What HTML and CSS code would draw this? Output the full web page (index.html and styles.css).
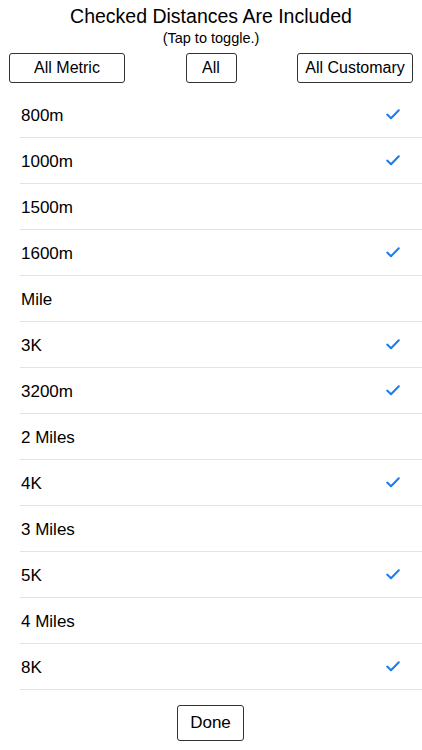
FILE: index.html
```html
<!DOCTYPE html>
<html>
<head>
<meta charset="utf-8">
<link rel="stylesheet" href="styles.css">
</head>
<body>
<div class="page">
  <header class="header">
    <div class="title">Checked Distances Are Included</div>
    <div class="subtitle">(Tap to toggle.)</div>
  </header>
  <div class="toolbar">
    <button class="btn btn-wide">All Metric</button>
    <button class="btn btn-narrow">All</button>
    <button class="btn btn-wide">All Customary</button>
  </div>
  <ul class="list">
    <li class="row"><span>800m</span><svg class="check" viewBox="0 0 14 11"><path d="M1.2 5.6 L5 9.2 L12.8 1.2"/></svg></li>
    <li class="row"><span>1000m</span><svg class="check" viewBox="0 0 14 11"><path d="M1.2 5.6 L5 9.2 L12.8 1.2"/></svg></li>
    <li class="row"><span>1500m</span></li>
    <li class="row"><span>1600m</span><svg class="check" viewBox="0 0 14 11"><path d="M1.2 5.6 L5 9.2 L12.8 1.2"/></svg></li>
    <li class="row"><span>Mile</span></li>
    <li class="row"><span>3K</span><svg class="check" viewBox="0 0 14 11"><path d="M1.2 5.6 L5 9.2 L12.8 1.2"/></svg></li>
    <li class="row"><span>3200m</span><svg class="check" viewBox="0 0 14 11"><path d="M1.2 5.6 L5 9.2 L12.8 1.2"/></svg></li>
    <li class="row"><span>2 Miles</span></li>
    <li class="row"><span>4K</span><svg class="check" viewBox="0 0 14 11"><path d="M1.2 5.6 L5 9.2 L12.8 1.2"/></svg></li>
    <li class="row"><span>3 Miles</span></li>
    <li class="row"><span>5K</span><svg class="check" viewBox="0 0 14 11"><path d="M1.2 5.6 L5 9.2 L12.8 1.2"/></svg></li>
    <li class="row"><span>4 Miles</span></li>
    <li class="row"><span>8K</span><svg class="check" viewBox="0 0 14 11"><path d="M1.2 5.6 L5 9.2 L12.8 1.2"/></svg></li>
  </ul>
  <div class="footer">
    <button class="btn btn-done">Done</button>
  </div>
</div>
</body>
</html>
```

FILE: styles.css
```css
* { box-sizing: border-box; }
html, body {
  margin: 0;
  padding: 0;
  background: #ffffff;
}
body {
  font-family: "Liberation Sans", Arial, sans-serif;
  color: #000;
}
.page {
  width: 422px;
  height: 750px;
  overflow: hidden;
}
.header {
  padding-top: 5px;
  text-align: center;
}
.title {
  font-size: 19.5px;
  line-height: 23px;
}
.subtitle {
  font-size: 14.5px;
  line-height: 16px;
  margin-top: 2px;
}
.toolbar {
  display: flex;
  justify-content: space-between;
  align-items: center;
  padding: 0 9px;
  margin-top: 7px;
}
.btn {
  font-family: "Liberation Sans", Arial, sans-serif;
  font-size: 16px;
  color: #000;
  background: #fff;
  border: 1px solid #333;
  border-radius: 3px;
  height: 30px;
  padding: 0;
  margin: 0;
}
.btn-wide { width: 116px; }
.btn-narrow { width: 51px; }
.list {
  list-style: none;
  margin: 9px 0 0 0;
  padding: 0 0 0 20px;
}
.row {
  height: 46px;
  display: flex;
  align-items: center;
  justify-content: space-between;
  border-bottom: 1px solid #e3e3e6;
  padding: 2px 22px 0 1px;
  font-size: 17px;
}
.check {
  width: 14px;
  height: 11px;
  fill: none;
  stroke: #1a7cf0;
  stroke-width: 2;
  stroke-linecap: round;
  stroke-linejoin: round;
  margin-top: -2px;
}
.footer {
  display: flex;
  justify-content: center;
  margin-top: 15px;
  padding-right: 1px;
}
.btn-done {
  width: 67px;
  height: 36px;
  font-size: 17px;
}
```
